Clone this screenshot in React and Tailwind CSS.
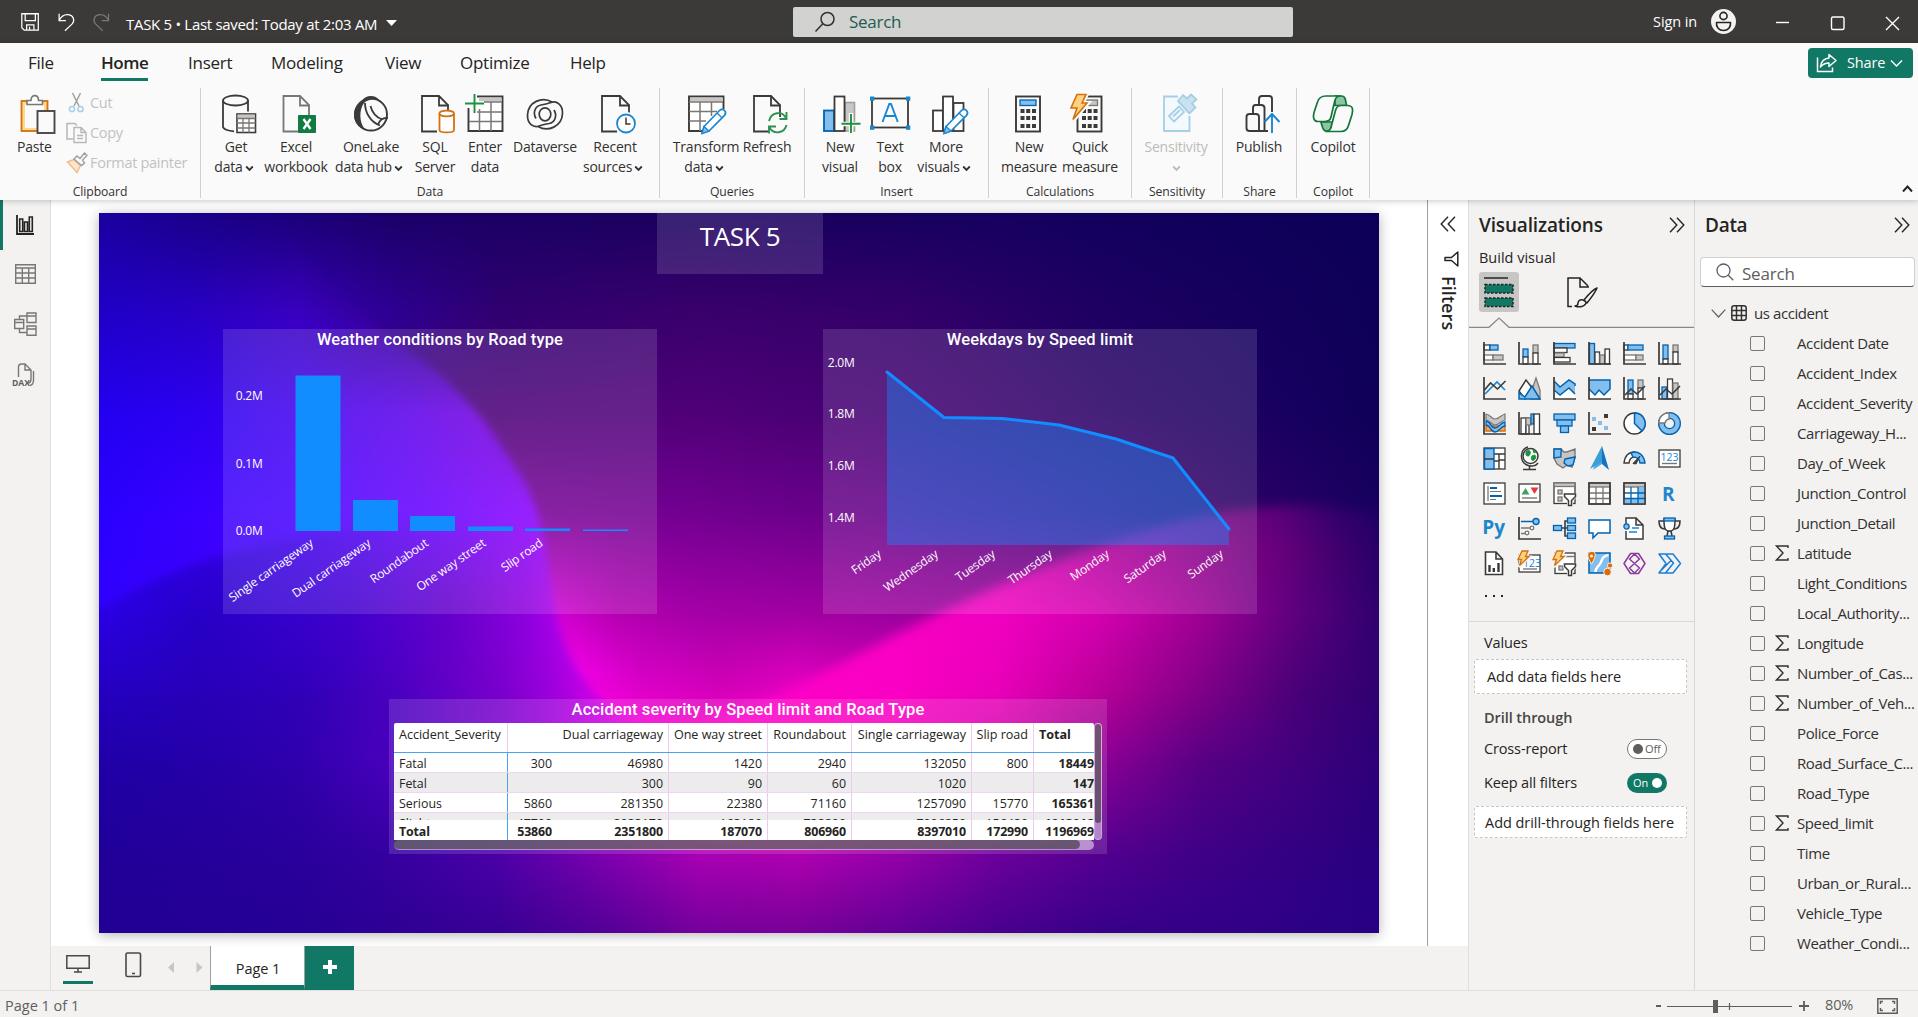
import React from "react";

const DK = "#3b3a39";
const BL = "#83beec";
const BS = "#0063b1";
const GF = "#c8c6c4";
const GS = "#797775";

/* ---------- small shared pieces ---------- */

function Chevron({ className = "text-[#323130]" }) {
  return (
    <svg width="9" height="7" viewBox="0 0 9 7" className={className}>
      <path d="M1.2 1.5 4.5 4.9 7.8 1.5" fill="none" stroke="currentColor" strokeWidth="1.8" />
    </svg>
  );
}

function DoubleChevron({ flip }) {
  return (
    <svg width="16" height="16" viewBox="0 0 16 16" className={flip ? "rotate-180" : ""}>
      <path d="M1 .8 7.8 8 1 15.2M8 .8 14.8 8 8 15.2" fill="none" stroke="#252423" strokeWidth="1.4" />
    </svg>
  );
}

/* ---------- title bar ---------- */

function TitleBar() {
  return (
    <header className="flex h-[43px] items-center bg-[#3b3a39] text-white">
      <svg width="130" height="43" viewBox="0 0 130 43" className="w-[126px] shrink-0" fill="none" stroke="#fff" strokeWidth="1.3">
        <path d="M22.500 13.500h17v17H25l-2.500-2.500zM26 13.500v7h10.500v-7M27.500 30.500v-5.500H35v5.500M30.500 27v3.500" />
        <path d="M61 13.500v7h7M61 20.500c2-4 5.500-6.500 9.500-6 5.500.8 7 6 4 9.500L67 31" />
        <path d="M112 13.500v7h-7M112 20.500c-2-4-5.500-6.500-9.500-6-5.500.8-7 6-4 9.500L106 31" stroke="#7a7876" />
      </svg>
      <span className="w-[260px] whitespace-nowrap pt-[5px] text-[15px] leading-5 tracking-[-0.020em]">TASK 5 • Last saved: Today at 2:03 AM</span>
      <svg width="11" height="6" viewBox="0 0 11 6" className="mt-[2px]"><path d="M0 0h11L5.500 6z" fill="#fff" /></svg>
      <div className="ml-[396px] flex h-[30px] w-[500px] items-center rounded-[2px] bg-[#d2d2d0] pl-[21px]">
        <svg width="22" height="22" viewBox="0 0 22 22" fill="none" stroke="#323130" strokeWidth="1.500">
          <circle cx="13.500" cy="8" r="6.500" /><path d="M8.800 12.700 1.500 20.500" />
        </svg>
        <span className="ml-[13px] text-[17px] tracking-[-0.016em] text-[#1d5c4f]">Search</span>
      </div>
      <span className="ml-[360px] w-[58px] whitespace-nowrap text-[14.500px] tracking-[-0.005em]">Sign in</span>
      <svg width="25" height="25" viewBox="0 0 25 25">
        <circle cx="12.500" cy="12.500" r="12.500" fill="#f3f2f1" />
        <circle cx="12.500" cy="7" r="3.600" fill="none" stroke="#252423" strokeWidth="1.600" />
        <path d="M5.500 13.500h14c.6 4.500-2.500 8-7 8s-7.600-3.500-7-8z" fill="none" stroke="#252423" strokeWidth="1.600" strokeLinejoin="round" />
      </svg>
      <svg width="130" height="20" viewBox="0 0 130 20" className="ml-[38px] mt-[2px]" fill="none" stroke="#fff" strokeWidth="1.400">
        <path d="M2 9.500h13" /><rect x="57.500" y="4" width="12.500" height="12.500" rx="1.500" />
        <path d="M112 4l13 13M125 4l-13 13" />
      </svg>
    </header>
  );
}

/* ---------- ribbon icons (40 x 40 boxes) ---------- */

const Doc = ({ x = 6, s = DK, w = 27 }) => (
  <g fill="#fff" stroke={s} strokeWidth="1.800">
    <path d={`M${x + 16} 37.500H${x + 1}V2h${w - 10}l9 9v12`} fill="#fafafa" />
    <path d={`M${x + w - 9} 2v9.500h9.500`} fill="none" />
  </g>
);

const Pencil = () => (
  <g transform="translate(16 14)">
    <path d="M0 25.500l2-7L17.500 2.500c1.500-1.500 3.700-1.500 5 0s1.200 3.500 0 4.800L7 23z" fill="#fff" stroke="#1a86d0" strokeWidth="1.700" strokeLinejoin="round" />
    <path d="M0 25.500l2-7 5 4.500z" fill="#83beec" stroke="#1a86d0" strokeWidth="1.300" />
    <path d="M15 5l5 4.800" stroke="#1a86d0" strokeWidth="1.300" />
  </g>
);

const Calc = ({ x, screen, ss }) => (
  <g>
    <rect x={x} y="2.500" width="24" height="35" fill="#fafafa" stroke={DK} strokeWidth="1.900" />
    <rect x={x + 4} y="6" width="16" height="5.500" fill={screen} stroke={ss} strokeWidth="1.300" />
    {[15, 22, 30].map((y) => [4.5, 10.2, 16].map((dx) => <rect key={`${y}-${dx}`} x={x + dx} y={y} width="4" height="4" fill={DK} />))}
  </g>
);

const icons = {
  paste: (
    <>
      <rect x="2.500" y="7" width="26" height="30" fill="#ffd98c" stroke="#d3700f" strokeWidth="1.800" />
      <rect x="6" y="10" width="19" height="24" fill="#fafafa" />
      <path d="M8 10.500V6.500h4c0-6.500 7.500-6.500 7.500 0h4v4z" fill="#fff" stroke="#797775" strokeWidth="1.600" />
      <rect x="18.500" y="17" width="17" height="22" fill="#fafafa" stroke="#4a4847" strokeWidth="1.900" />
    </>
  ),
  get: (
    <>
      <path d="M7 6.500v26c0 2.500 5 4.500 11 4.800M32 6.500v11" fill="none" stroke={DK} strokeWidth="1.800" />
      <ellipse cx="19.500" cy="6.500" rx="12.500" ry="5" fill="#fafafa" stroke={DK} strokeWidth="1.800" />
      <rect x="21" y="20" width="18.500" height="18.500" fill="#fff" stroke={DK} strokeWidth="1.600" />
      <rect x="21.500" y="20.500" width="17.500" height="3.500" fill={GF} />
      <path d="M21 24.500h18.500M21 29h18.500M21 34h18.500M27 24.500v14M33 24.500v14" stroke={GS} strokeWidth="1.300" />
    </>
  ),
  excel: (
    <>
      <Doc x={6.5} s="#797775" w={26.5} />
      <rect x="22" y="21" width="18" height="18" rx="1" fill="#107c41" />
      <path d="M27.500 25l7 10M34.500 25l-7 10" stroke="#fff" strokeWidth="2.400" />
    </>
  ),
  onelake: (
    <>
      <circle cx="20" cy="20.500" r="16" fill="#fafafa" stroke={DK} strokeWidth="1.900" />
      <path d="M11 7C14 .5 25 .5 28 6c-7-1.500-12 0-15 3C8 16 8 28 14 35.500 1 32-1 14 11 7z" fill={DK} />
      <path d="M14 9c0 9 5 19 15 22.500M19.500 12c2 8 7 12 12 13.500M27 30.500c2-5 6-7 10-6.500" fill="none" stroke={DK} strokeWidth="1.800" />
    </>
  ),
  sql: (
    <>
      <Doc x={6} />
      <path d="M24.500 19.500v16.500c0 3.200 14.500 3.200 14.500 0V19.500" fill="#fff" stroke="#d3700f" strokeWidth="1.800" />
      <ellipse cx="31.700" cy="19.500" rx="7.300" ry="2.800" fill="#fff" stroke="#d3700f" strokeWidth="1.800" />
    </>
  ),
  enter: (
    <>
      <path d="M12 2.500h25.500v34.500h-34V14" fill="#fff" stroke={DK} strokeWidth="1.900" />
      <rect x="14" y="3.500" width="22.500" height="4" fill={GF} />
      <path d="M14 8h23M9 18h28M4 27.500h33M14.500 15v22M26 8v29" stroke={GS} strokeWidth="1.500" fill="none" />
      <path d="M9.500 0v19M0 9.500h19" stroke="#fafafa" strokeWidth="5" />
      <path d="M9.500 0v19M0 9.500h19" stroke="#1e9141" strokeWidth="1.900" />
    </>
  ),
  dataverse: (
    <g fill="none" stroke={DK} strokeWidth="1.700">
      <path d="M27 8C17 2 3 8 2.500 21c-.3 9 6 13 11.500 11 4-1.500 6-2 10-2.500 6-1 8.500-8 5-13.500" />
      <path d="M13 32.500c10 6 24 0 24.500-13 .3-9-6-13-11.500-11-4 1.500-6 2-10 2.500-6 1-8.500 8-5 13.500" />
      <ellipse cx="20" cy="20.300" rx="5.800" ry="6.500" />
    </g>
  ),
  recent: (
    <>
      <Doc x={6} w={28} />
      <circle cx="31" cy="29.500" r="11.500" fill="#fafafa" />
      <circle cx="31" cy="29.500" r="9" fill="#fff" stroke="#1a86d0" strokeWidth="1.800" />
      <path d="M31 23.500v6.500h4.500" fill="none" stroke={DK} strokeWidth="1.500" />
    </>
  ),
  transform: (
    <>
      <path d="M18 37H3V2.500h34.500V15" fill="#fff" stroke={DK} strokeWidth="1.900" />
      <rect x="4" y="3.500" width="33" height="4" fill={GF} />
      <path d="M3 8h34M3 17.500h28M3 27h17M14 8v29M25.500 8v14" stroke={GS} strokeWidth="1.500" fill="none" />
      <Pencil />
    </>
  ),
  refresh: (
    <>
      <Doc x={6} />
      <path d="M22 27c2-9 13-10.500 17-3M39.500 18v7h-7M39.500 31c-2 8.500-13 10-17 2.500M22 39.500v-7h7" fill="none" stroke="#2f9150" strokeWidth="1.900" />
    </>
  ),
  newvisual: (
    <>
      <rect x="25" y="8.500" width="9.500" height="28.500" fill={GF} stroke="#a19f9d" strokeWidth="1.600" />
      <rect x="4" y="16.500" width="10" height="20.500" fill={BL} stroke={BS} strokeWidth="1.800" />
      <rect x="14.500" y="2.500" width="10" height="34.500" fill="#fff" stroke={DK} strokeWidth="1.800" />
      <path d="M31 19v21M20 30h21" stroke="#fafafa" strokeWidth="4.500" />
      <path d="M31 20v19M21.500 29.800h19" stroke="#1e9141" strokeWidth="1.900" />
    </>
  ),
  textbox: (
    <>
      <rect x="2" y="4.500" width="36" height="29" fill="#fafafa" stroke={DK} strokeWidth="1.800" />
      {[[0, 2.5], [36, 2.5], [0, 31.500], [36, 31.500]].map(([x, y]) => <rect key={`${x}${y}`} x={x} y={y} width="4.300" height="4.300" fill="#1a86d0" />)}
      <path d="M12.500 28L19.300 10h1.700l6.800 18M15 22h10.500" fill="none" stroke="#1a86d0" strokeWidth="1.900" />
    </>
  ),
  morevisuals: (
    <g transform="translate(2 0)">
      <rect x="25.500" y="9" width="10" height="28" fill="#fff" stroke={DK} strokeWidth="1.800" />
      <rect x="5" y="16.500" width="10" height="20.500" fill="#fff" stroke={DK} strokeWidth="1.800" />
      <rect x="15" y="2.500" width="10" height="34.500" fill="#fff" stroke={DK} strokeWidth="1.800" />
      <Pencil />
    </g>
  ),
  newmeasure: <Calc x={7} screen={BL} ss={BS} />,
  quickmeasure: (
    <>
      <Calc x={7.5} screen={GF} ss={GS} />
      <path d="M8 0h9l-4.500 9H18L3 27l4-12.500H0z" fill="#fafafa" stroke="#fafafa" strokeWidth="4" />
      <path d="M7 .5h9L12 9h5L3 25.500l4-11.500H1z" fill="#ffd27f" stroke="#d3700f" strokeWidth="1.600" />
    </>
  ),
  sensitivity: (
    <g stroke="#a6cfe6" fill="#fff" strokeWidth="1.800">
      <path d="M22 2.500H8v34.500h25.500V22" fill="#f3f9fc" />
      <path d="M13 22l10-9.500 5 5.500-10 9.500z" fill="none" />
      <path d="M17 22.500l7-6.500" fill="none" />
      <path d="M22 7l5-6 4 3.500L35 .5l5.500 5-4.500 4 3.500 4-6 6z" fill="#c9e2f0" />
      <path d="M22 7l11.500 12.500" fill="none" />
    </g>
  ),
  publish: (
    <>
      <g fill="#fafafa" stroke={DK} strokeWidth="1.900">
        <path d="M20 37V5c0-2 1-3 3-3h7c2 0 3 1 3 3v32" />
        <path d="M14 37V14c0-2 1-3 2.500-3H22c2 0 3.500 1 3.500 3v23" />
        <path d="M7.500 34V23c0-2 1-3 3-3h6.500c2 0 3 1 3 3v14h-9.500c-2 0-3-1-3-3zM20 37h9" />
      </g>
      <path d="M33 39V18" stroke="#fafafa" strokeWidth="6" />
      <path d="M33 39V20.500M25.500 28L33 20l7.500 8" fill="none" stroke="#1a86d0" strokeWidth="1.900" />
    </>
  ),
  copilot: (
    <g stroke="#13753b" strokeWidth="1.700" fill="#fafafa" strokeLinejoin="round">
      <path d="M22 2h7c3 0 3.500 3 4.500 9.500H22z" fill="#8cc5a2" />
      <path d="M8 28h12l-3 9h-4c-3 0-4-4-5-9z" fill="#8cc5a2" />
      <path d="M13 2h14c-4 0-5 3-6 8l-3 13c-1 4-3 4.500-6 4.500H5c-5 0-5-5-4-9L4.500 8C6 3 9 2 13 2z" />
      <path d="M28 37.500H13c4 0 5-3 6-8l3.500-13c1-4 2.500-5 5.500-5h6.500c6 0 5.500 5 4.500 9l-3.500 11c-1.500 5-4 6-7.500 6z" />
    </g>
  ),
};

function RibbonIcon({ name }) {
  return <svg width="42" height="40" viewBox="-1 0 42 40" className="block shrink-0 overflow-visible">{icons[name]}</svg>;
}

function RibbonButton({ icon, lines, chevron, className, muted }) {
  return (
    <button className={`flex w-[44px] shrink-0 flex-col items-center ${muted ? "text-[#bdbbb9]" : "text-[#323130]"} ${className}`}>
      <RibbonIcon name={icon} />
      <span className="mt-[3px] flex flex-col items-center whitespace-nowrap text-[14px] leading-5 tracking-[-0.015em]">
        <span>{lines[0]}</span>
        {(lines[1] || chevron) && (
          <span className={`flex items-center gap-[2px] ${lines[1] && chevron ? "pr-[4px]" : ""}`}>
            {lines[1]}
            {chevron && <Chevron className={muted ? "mt-[8px] text-[#bdbbb9]" : "mt-[3px] text-[#323130]"} />}
          </span>
        )}
      </span>
    </button>
  );
}

function Group({ label, className, children }) {
  return (
    <section className={`flex h-[110px] shrink-0 flex-col border-r border-[#d2d0ce] ${className}`}>
      <div className="flex h-[96px] shrink-0 pt-[6px]">{children}</div>
      <div className="text-center text-[12.200px] leading-[16px] tracking-[-0.005em] text-[#323130]">{label}</div>
    </section>
  );
}

function ClipRow({ children, label }) {
  return (
    <div className="flex h-[30px] items-center text-[14.500px] tracking-[-0.020em] text-[#c3c1bf]">
      <svg width="22" height="22" viewBox="0 0 22 22" className="mr-[2px]">{children}</svg>
      <span className="whitespace-nowrap">{label}</span>
    </div>
  );
}

function Ribbon() {
  const tabs = [
    ["File", "w-[73px]"], ["Home", "w-[87px]"], ["Insert", "w-[83px]"], ["Modeling", "w-[114px]"],
    ["View", "w-[75px]"], ["Optimize", "w-[110px]"], ["Help", "w-[60px]"],
  ];
  return (
    <div className="relative z-10 h-[157px] bg-[#fafafa] shadow-[0_1px_6px_rgba(0,0,0,0.22)]">
      <nav className="flex h-[45px] items-start pl-[28px] pt-[5px] text-[17px] text-[#252423]">
        {tabs.map(([t, w]) => (
          <div key={t} className={`${w} flex`}>
            <span className={t === "Home" ? "h-[33px] border-b-[3px] border-[#117865] font-semibold leading-[30px] tracking-[-0.025em]" : "leading-[30px] tracking-[-0.015em]"}>{t}</span>
          </div>
        ))}
        <button className="ml-auto mr-[5px] flex h-[30px] w-[105px] items-center rounded-[4px] bg-[#117865] pl-[8px] text-[14.500px] text-white">
          <svg width="22" height="20" viewBox="0 0 22 20" fill="none" stroke="#fff" strokeWidth="1.500">
            <path d="M1.500 4.500v14h15v-4" /><path d="M13 1.500l7 6-7 6v-3.500c-4 0-6.500 1.500-8.500 4 .5-5 3.500-8.500 8.500-9z" strokeLinejoin="round" />
          </svg>
          <span className="ml-[9px] tracking-[-0.010em]">Share</span>
          <svg width="13" height="9" viewBox="0 0 13 9" className="ml-[5px]"><path d="M1 1.500l5.500 5.500L12 1.500" fill="none" stroke="#fff" strokeWidth="1.400" /></svg>
        </button>
      </nav>
      <div className="flex">
        <Group label="Clipboard" className="w-[201px]">
          <button className="ml-[18px] flex w-[40px] shrink-0 flex-col items-start text-[#323130]">
            <RibbonIcon name="paste" />
            <span className="-ml-px mt-[3px] whitespace-nowrap text-[14px] leading-5 tracking-[-0.015em]">Paste</span>
          </button>
          <div className="-mt-[6px] ml-[8px]">
            <ClipRow label="Cut">
              <path d="M6.500 1l6.500 13M14.500 1L8 14" stroke="#a19f9d" strokeWidth="1.500" fill="none" />
              <circle cx="6" cy="17" r="2.600" fill="none" stroke="#a6cfe6" strokeWidth="1.500" /><circle cx="14.500" cy="17" r="2.600" fill="none" stroke="#a6cfe6" strokeWidth="1.500" />
            </ClipRow>
            <ClipRow label="Copy">
              <path d="M7 17H1V1.500h8l2 2" fill="none" stroke="#b9b7b5" strokeWidth="1.500" />
              <path d="M8 5.500h7l5 5v10H8zM15 5.500v5h5M11 13.500h6M11 16.500h6" fill="none" stroke="#b9b7b5" strokeWidth="1.400" />
            </ClipRow>
            <ClipRow label="Format painter">
              <path d="M1.500 10l6-2.500 7 6L11 20.500z" fill="#fde3c8" stroke="#efbb8a" strokeWidth="1.400" />
              <path d="M8 7l3-3 3 2.500L18.500 1 21 3.500 16.500 8l2 3-3 2.500z" fill="#fafafa" stroke="#a19f9d" strokeWidth="1.400" />
            </ClipRow>
          </div>
        </Group>
        <Group label="Data" className="w-[459px]">
          <RibbonButton icon="get" lines={["Get", "data"]} chevron className="ml-[13px]" />
          <RibbonButton icon="excel" lines={["Excel", "workbook"]} className="ml-[16px]" />
          <RibbonButton icon="onelake" lines={["OneLake", "data hub"]} chevron className="ml-[31px]" />
          <RibbonButton icon="sql" lines={["SQL", "Server"]} className="ml-[20px]" />
          <RibbonButton icon="enter" lines={["Enter", "data"]} className="ml-[6px]" />
          <RibbonButton icon="dataverse" lines={["Dataverse"]} className="ml-[16px]" />
          <RibbonButton icon="recent" lines={["Recent", "sources"]} chevron className="ml-[26px]" />
        </Group>
        <Group label="Queries" className="w-[145px]">
          <RibbonButton icon="transform" lines={["Transform", "data"]} chevron className="ml-[24px]" />
          <RibbonButton icon="refresh" lines={["Refresh"]} className="ml-[17px]" />
        </Group>
        <Group label="Insert" className="w-[184px]">
          <RibbonButton icon="newvisual" lines={["New", "visual"]} className="ml-[13px]" />
          <RibbonButton icon="textbox" lines={["Text", "box"]} className="ml-[6px]" />
          <RibbonButton icon="morevisuals" lines={["More", "visuals"]} chevron className="ml-[12px]" />
        </Group>
        <Group label="Calculations" className="w-[143px]">
          <RibbonButton icon="newmeasure" lines={["New", "measure"]} className="ml-[18px]" />
          <RibbonButton icon="quickmeasure" lines={["Quick", "measure"]} className="ml-[17px]" />
        </Group>
        <Group label="Sensitivity" className="w-[91px]">
          <RibbonButton icon="sensitivity" lines={["Sensitivity"]} chevron muted className="ml-[22px]" />
        </Group>
        <Group label="Share" className="w-[74px]">
          <RibbonButton icon="publish" lines={["Publish"]} className="ml-[14px]" />
        </Group>
        <Group label="Copilot" className="w-[73px]">
          <RibbonButton icon="copilot" lines={["Copilot"]} className="ml-[14px]" />
        </Group>
        <svg width="11" height="8" viewBox="0 0 11 8" className="ml-auto mr-[5px] mt-[97px]"><path d="M1 6.500l4.500-5 4.500 5" fill="none" stroke="#252423" strokeWidth="1.900" /></svg>
      </div>
    </div>
  );
}

/* ---------- left rail ---------- */

function Rail() {
  return (
    <aside className="flex h-[790px] w-[51px] shrink-0 flex-col border-r border-[#e1dfdd] bg-[#f3f2f1]">
      <div className="flex h-[50px] items-center border-l-[3px] border-[#117865] pl-[13px]">
        <svg width="18" height="22" viewBox="0 0 18 22" fill="none" stroke="#252423" strokeWidth="1.600">
          <path d="M1 1v19h17" strokeWidth="1.800" /><path d="M3.700 5h3v12.500h-3zM8.500 8h3v9.500h-3zM13.300 3h3v14.500h-3z" />
        </svg>
      </div>
      <div className="flex h-[48px] items-center pl-[15px]">
        <svg width="21" height="20" viewBox="0 0 21 20" fill="none" stroke="#797775" strokeWidth="1.400">
          <path d="M.7.7h19.600v18.600H.7zM.7 4h19.600M.7 9h19.600M.7 14h19.600M7.300 4v15M13.700 4v15" />
        </svg>
      </div>
      <div className="flex h-[52px] items-center pl-[14px]">
        <svg width="23" height="24" viewBox="0 0 23 24" fill="none" stroke="#797775" strokeWidth="1.400">
          <path d="M.7 7.500h9v9h-9zM.7 10.500h9M13 1h9v9.500h-9zM13 4h9M13 14h9v9.300h-9zM13 17h9M5.500 7.500V4H13M5.500 16.500v4H13" />
        </svg>
      </div>
      <div className="flex h-[50px] items-center pl-[12px]">
        <svg width="24" height="24" viewBox="0 0 24 24" fill="none" stroke="#797775" strokeWidth="1.400">
          <path d="M6.500 14V4c0-2 1-3 3-3H13l6 6v9c0 2-.5 4-3 4M13 1v6h6M21.500 8v9c0 3-1 5-3.500 5.500" />
          <text x="0" y="22.500" fontSize="8.600" fontWeight="700" fill="#605e5c" stroke="none" fontFamily="Open Sans">DAX</text>
        </svg>
      </div>
    </aside>
  );
}

/* ---------- wallpaper: bilinear colour meshes ---------- */

function Mesh({ id, rows }) {
  return (
    <g>
      {rows.map(([y, stops], i) => {
        const prev = i === 0 ? y - 1 : rows[i - 1][0];
        return (
          <g key={y}>
            <defs>
              <linearGradient id={`${id}h${i}`} gradientUnits="userSpaceOnUse" x1="0" y1="0" x2="1280" y2="0">
                {stops.map(([x, c]) => <stop key={x} offset={x / 1280} stopColor={c} />)}
              </linearGradient>
              <linearGradient id={`${id}v${i}`} gradientUnits="userSpaceOnUse" x1="0" y1={prev} x2="0" y2={y}>
                <stop offset="0" stopColor="#fff" stopOpacity="0" /><stop offset="1" stopColor="#fff" />
              </linearGradient>
              <mask id={`${id}m${i}`} maskUnits="userSpaceOnUse" x="0" y="0" width="1280" height="720" style={{ maskType: "alpha" }}>
                <rect y={Math.max(prev, 0)} width="1280" height="720" fill={`url(#${id}v${i})`} />
              </mask>
            </defs>
            <rect width="1280" height="720" fill={`url(#${id}h${i})`} mask={i === 0 ? undefined : `url(#${id}m${i})`} />
          </g>
        );
      })}
    </g>
  );
}

const r480 = [[0, "#2400c0"], [100, "#2800b8"], [200, "#3000b8"], [300, "#4c00c0"], [400, "#7800cc"], [450, "#9a00dc"], [490, "#c400e4"], [520, "#e400e0"], [600, "#f000cc"], [700, "#fc00c6"], [800, "#fa00c4"], [900, "#e800b8"], [1000, "#b80098"], [1100, "#800088"], [1200, "#480078"], [1280, "#300070"]];
const tail = [
  [550, [[0, "#2000a8"], [100, "#2400a8"], [200, "#3000ac"], [300, "#4c00be"], [400, "#7800cc"], [500, "#c000dc"], [545, "#e800d8"], [600, "#ff00c8"], [700, "#ff00c8"], [800, "#f000c0"], [900, "#c800a8"], [1000, "#8c0094"], [1100, "#580084"], [1280, "#2c0078"]]],
  [640, [[0, "#200098"], [200, "#2a009c"], [280, "#3400a0"], [400, "#4c00a8"], [500, "#7c00b0"], [600, "#aa00b4"], [700, "#b000b0"], [800, "#9400a8"], [900, "#6c009c"], [1000, "#540090"], [1100, "#400088"], [1280, "#280080"]]],
  [720, [[0, "#220094"], [200, "#260094"], [400, "#380094"], [500, "#500096"], [600, "#74009a"], [700, "#760098"], [800, "#600094"], [900, "#48008c"], [1000, "#380088"], [1280, "#280084"]]],
];
const back = [
  [0, [[0, "#1c00a0"], [100, "#1a0088"], [300, "#1b0068"], [600, "#1a005e"], [900, "#150060"], [1280, "#0c0058"]]],
  [100, [[0, "#2000c8"], [100, "#2a00c0"], [200, "#3600b8"], [300, "#2e0090"], [400, "#300070"], [600, "#3a006c"], [800, "#34006a"], [1000, "#1e0062"], [1280, "#0e0058"]]],
  [200, [[300, "#480080"], [400, "#4c0078"], [600, "#500078"], [800, "#440072"], [1000, "#2a0066"], [1200, "#160060"], [1280, "#100058"]]],
  [300, [[400, "#780098"], [600, "#720090"], [800, "#640086"], [1000, "#460076"], [1100, "#340068"], [1280, "#180060"]]],
  [400, [[460, "#d000d0"], [520, "#b400b0"], [600, "#a400a8"], [750, "#a000a0"], [900, "#980098"], [1100, "#800088"], [1280, "#300068"]]],
  [460, [[480, "#f000e4"], [540, "#d400c4"], [620, "#c800b4"], [700, "#d800bc"], [1280, "#300070"]]],
  [520, [[500, "#ff00e0"], [600, "#f400c8"], [720, "#ff00c8"], [1280, "#300070"]]],
];
const left = [
  [0, back[0][1]],
  [100, [[0, "#2000c8"], [100, "#2800c4"], [200, "#3a00c0"], [260, "#3400a0"], [330, "#300080"]]],
  [200, [[0, "#2200f0"], [120, "#3000f0"], [300, "#5a00ec"], [380, "#7000e0"], [420, "#7000d0"]]],
  [300, [[0, "#2a00ff"], [200, "#4800ff"], [350, "#6c00ff"], [440, "#8c00ff"]]],
  [390, [[0, "#3000ff"], [150, "#4000f4"], [250, "#4800d8"], [350, "#6400cc"], [430, "#9000e0"], [470, "#b800ec"]]],
  [480, r480],
  ...tail,
];
const lowerLeft = [
  [310, [[0, "#2a00ee"], [200, "#3a00e4"], [350, "#5800e0"]]],
  [400, [[0, "#2a00e4"], [100, "#2800c8"], [250, "#3800c0"], [350, "#6000c8"]]],
  [480, r480],
  ...tail,
];
const lower = [
  [290, [[900, "#c000a0"], [1000, "#980090"], [1100, "#780084"], [1180, "#580078"], [1240, "#30006a"], [1280, "#200064"]]],
  [340, [[900, "#e000b4"], [1000, "#b400a0"], [1100, "#8c008c"], [1180, "#68007c"], [1240, "#40006e"], [1280, "#280068"]]],
  [400, [[800, "#f800c4"], [900, "#f000c0"], [1000, "#d400b0"], [1100, "#a00094"], [1200, "#5c007e"], [1280, "#300070"]]],
  [480, r480],
  ...tail,
];

function Wallpaper() {
  return (
    <svg width="1280" height="720" viewBox="0 0 1280 720" className="absolute inset-0">
      <defs>
        <filter id="soft3" x="-20%" y="-20%" width="140%" height="140%"><feGaussianBlur stdDeviation="4" /></filter>
        <filter id="soft7" x="-20%" y="-20%" width="140%" height="140%"><feGaussianBlur stdDeviation="6" /></filter>
        <linearGradient id="fadeR" gradientUnits="userSpaceOnUse" x1="120" y1="0" x2="330" y2="0"><stop offset="0" stopColor="#fff" /><stop offset="1" stopColor="#fff" stopOpacity="0" /></linearGradient>
        <mask id="mLower" maskUnits="userSpaceOnUse" x="0" y="0" width="1280" height="720" style={{ maskType: "alpha" }}>
          <path d="M-40 760V510H580C660 500 740 450 800 420C880 380 960 345 1040 320C1110 298 1170 288 1240 294L1340 310V760Z" fill="#fff" filter="url(#soft7)" />
        </mask>
        <mask id="mLeft" maskUnits="userSpaceOnUse" x="0" y="0" width="1280" height="720" style={{ maskType: "alpha" }}>
          <path d="M-40 -40H150C200 40 250 95 300 130C325 148 342 160 359 179C376 196 389 211 400 230C415 252 426 266 433 285C442 309 446 328 449 349C453 373 456 394 461 413C465 430 470 442 478 455C485 468 500 486 524 502C550 516 560 540 560 560V760H-40Z" fill="#fff" filter="url(#soft3)" />
        </mask>
        <mask id="mLL" maskUnits="userSpaceOnUse" x="0" y="0" width="1280" height="720" style={{ maskType: "alpha" }}>
          <path d="M-40 420L0 397C60 360 130 336 200 326C250 318 300 314 360 312V760H-40Z" fill="url(#fadeR)" filter="url(#soft3)" />
        </mask>
      </defs>
      <Mesh id="bk" rows={back} />
      <g mask="url(#mLower)"><Mesh id="lo" rows={lower} /></g>
      <g mask="url(#mLeft)"><Mesh id="lf" rows={left} /></g>
      <g mask="url(#mLL)"><Mesh id="ll" rows={lowerLeft} /></g>
    </svg>
  );
}

/* ---------- report visuals (items on a free canvas) ---------- */

function CardTitle({ children, className }) {
  return <h2 className={`whitespace-nowrap text-center font-['Roboto'] text-[16.500px] font-medium leading-[22px] text-white ${className}`}>{children}</h2>;
}

function BarVisual() {
  const bars = [[72.5, 155.5], [130, 31], [187, 15], [245, 4.5], [302, 2.5], [360, 1.5]];
  const labels = [["Single carriageway", 91], ["Dual carriageway", 148.500], ["Roundabout", 206], ["One way street", 263.500], ["Slip road", 320.500]];
  return (
    <div className="absolute left-[124px] top-[116px] h-[285px] w-[434px] bg-white/[0.13]">
      <CardTitle className="tracking-[0.008em]">Weather conditions by Road type</CardTitle>
      <svg width="434" height="263" viewBox="0 22 434 263" className="block font-['Open_Sans'] text-[12px]" fill="#fff">
        {[["0.2M", 71], ["0.1M", 138.500], ["0.0M", 205.500]].map(([t, y]) => <text key={t} x="39.500" y={y} textAnchor="end" className="tracking-[-0.020em]">{t}</text>)}
        {bars.map(([x, h]) => <rect key={x} x={x} y={202 - h} width="45" height={h} fill="#118dff" />)}
        {labels.map(([t, x]) => <text key={t} x={x} y="216" textAnchor="end" transform={`rotate(-35 ${x} 216)`} className="text-[12px] tracking-[-0.018em]">{t}</text>)}
      </svg>
    </div>
  );
}

function AreaVisual() {
  const days = ["Friday", "Wednesday", "Tuesday", "Thursday", "Monday", "Saturday", "Sunday"];
  const pts = "64,43 121,88.500 179,89.500 236,96 293,110 350,129 406,200";
  return (
    <div className="absolute left-[724px] top-[116px] h-[285px] w-[434px] bg-white/[0.13]">
      <CardTitle className="tracking-[0.008em]">Weekdays by Speed limit</CardTitle>
      <svg width="434" height="263" viewBox="0 22 434 263" className="block font-['Open_Sans'] text-[12px]" fill="#fff">
        {[["2.0M", 37.5], ["1.8M", 89], ["1.6M", 141], ["1.4M", 193]].map(([t, y]) => <text key={t} x="31.500" y={y} textAnchor="end" className="tracking-[-0.020em]">{t}</text>)}
        <polygon points={`64,216 ${pts} 406,216`} fill="#118dff" fillOpacity="0.400" />
        <polyline points={pts} fill="none" stroke="#118dff" strokeWidth="3" strokeLinejoin="round" strokeLinecap="round" />
        {days.map((d, i) => <text key={d} x={59 + i * 57} y="227" textAnchor="end" transform={`rotate(-35 ${59 + i * 57} 227)`} className="text-[12px] tracking-[-0.018em]">{d}</text>)}
      </svg>
    </div>
  );
}

const cols = "grid grid-cols-[114px_49px_112px_99px_84px_120px_62px_60px]";

function TableRow({ cells, className, bold, gray }) {
  return (
    <div className={`${cols} ${className} ${gray ? "bg-[#ececec]" : "bg-white"}`}>
      {cells.map((c, i) => (
        <div
          key={i}
          className={`overflow-hidden whitespace-nowrap border-[#eec8ee] ${i === 0 ? "border-r-[1.500px] border-r-[#45a5f5] pl-[5px]" : i === 7 ? "flex justify-end font-bold" : `text-right pr-[5px] ${i === 1 ? "" : "border-r"}`} ${bold ? "font-bold tracking-[-0.010em]" : ""}`}
        >
          {c}
        </div>
      ))}
    </div>
  );
}

function MatrixVisual() {
  const head = ["Accident_Severity", "", "Dual carriageway", "One way street", "Roundabout", "Single carriageway", "Slip road", "Total"];
  return (
    <div className="absolute left-[290px] top-[486px] h-[155px] w-[718px] bg-white/[0.13] pl-[5px]">
      <CardTitle className="mr-[5px] h-[24px] leading-[21px] tracking-[0.006em]">Accident severity by Speed limit and Road Type</CardTitle>
      <div className="flex">
        <div className="flex h-[117px] w-[700px] flex-col overflow-hidden rounded-t-[2px] bg-white font-['Open_Sans'] text-[12.400px] text-[#252423]">
          <div className={`${cols} h-[30px] shrink-0 border-b-[1.500px] border-[#45a5f5] text-[12.600px] leading-[23px] tracking-[-0.002em]`}>
            {head.map((c, i) => (
              <div key={i} className={`whitespace-nowrap border-[#f3cdf0] ${i === 0 ? "border-r pl-[5px]" : i === 7 ? "pl-[5px] font-bold" : `flex justify-end pr-[5px] ${i === 1 ? "" : "border-r"}`}`}>{c}</div>
            ))}
          </div>
          <TableRow className="h-5 shrink-0 border-b border-[#f0d5f2] leading-[21px]" cells={["Fatal", "300", "46980", "1420", "2940", "132050", "800", "18449"]} />
          <TableRow gray className="h-5 shrink-0 border-b border-[#f0d5f2] leading-[21px]" cells={["Fetal", "", "300", "90", "60", "1020", "", "147"]} />
          <TableRow className="h-5 shrink-0 border-b border-[#f0d5f2] leading-[21px]" cells={["Serious", "5860", "281350", "22380", "71160", "1257090", "15770", "165361"]} />
          <TableRow gray className="h-[7px] shrink-0 overflow-hidden leading-[21px]" cells={["Slight", "47700", "2023170", "163180", "732800", "7006850", "156420", "1013012"]} />
          <TableRow bold className="h-5 shrink-0 leading-[24px]" cells={["Total", "53860", "2351800", "187070", "806960", "8397010", "172990", "1196969"]} />
        </div>
        <div className="h-[117px] w-[8px] rounded-[4px] border border-white/30 bg-white/45">
          <div className="h-[99px] rounded-[4px] bg-[#252423]/55" />
        </div>
      </div>
      <div className="h-[10px] w-[700px] rounded-[5px] bg-white/50">
        <div className="h-[9px] w-[686px] rounded-[5px] bg-[#252423]/55" />
      </div>
    </div>
  );
}

function Report() {
  return (
    <main className="relative h-[746px] w-[1376px] shrink-0 bg-white">
      <div className="absolute left-[48px] top-[13px] h-[720px] w-[1280px] overflow-hidden shadow-[0_2px_12px_rgba(0,0,0,0.3)]">
        <Wallpaper />
        <div className="absolute left-[558px] top-0 h-[61px] w-[166px] bg-white/[0.13] text-center font-['Open_Sans'] text-[26px] leading-[47px] tracking-[-0.012em] text-white">TASK 5</div>
        <BarVisual />
        <AreaVisual />
        <MatrixVisual />
      </div>
    </main>
  );
}

/* ---------- bottom page tabs ---------- */

function PageTabs() {
  return (
    <div className="flex h-[44px] items-start bg-[#f3f2f1]">
      <div className="ml-[12px] flex h-[38px] w-[30px] flex-col items-center border-b-[3px] border-[#117865] pt-[9px]">
        <svg width="24" height="18" viewBox="0 0 24 18" fill="none" stroke="#4a4847" strokeWidth="1.500"><path d="M.8.800h22.400v12.400H.8zM12 13v4M8 17h8" /></svg>
      </div>
      <svg width="17" height="26" viewBox="0 0 17 26" className="ml-[32px] mt-[6px]" fill="none" stroke="#4a4847" strokeWidth="1.600"><rect x="1" y="1" width="14.500" height="23.500" rx="1.500" /><path d="M7 21.500h3" /></svg>
      <svg width="36" height="12" viewBox="0 0 36 12" className="ml-[26px] mt-[16px]" fill="#c8c6c4"><path d="M6 0v11L0 5.500zM28.500 0v11l6-5.500z" /></svg>
      <div className="ml-[6px] flex h-[44px] w-[95px] items-center justify-center border-x border-b-[5px] border-x-[#a19f9d] border-b-[#117865] bg-white pl-[1px] pt-[6px] text-[14.500px] tracking-[-0.005em] text-[#252423]">Page 1</div>
      <div className="flex h-[44px] w-[49px] items-center justify-center bg-[#117865]">
        <svg width="14" height="14" viewBox="0 0 14 14" className="mb-[3px]"><path d="M7 0v14M0 7h14" stroke="#fff" strokeWidth="4" /></svg>
      </div>
    </div>
  );
}

/* ---------- filters ---------- */

function Filters() {
  return (
    <aside className="flex h-[746px] w-[41px] flex-col items-center border-l border-[#a19f9d] bg-white pt-[16px]">
      <DoubleChevron flip />
      <svg width="15" height="16" viewBox="0 0 15 16" className="ml-[7px] mt-[19px]"><path d="M13.800 1v14L7.500 9.500H1v-3h6.500z" fill="none" stroke="#252423" strokeWidth="1.500" strokeLinejoin="round" /></svg>
      <span className="ml-[2px] mt-[9px] text-[18px] font-semibold leading-[20px] tracking-[0.005em] text-[#252423] [writing-mode:vertical-rl]">Filters</span>
    </aside>
  );
}

/* ---------- visualisations pane ---------- */

const Ax = () => <path d="M1 0v22h22" fill="none" stroke={DK} strokeWidth="1.700" />;
const R = ({ x, y, w, h, f = "#fff", s = DK }) => <rect x={x} y={y} width={w} height={h} fill={f} stroke={s} strokeWidth="1.300" />;
const B = (p) => <R {...p} f={BL} s={BS} />;
const G = (p) => <R {...p} f={GF} s={GS} />;
const Bolt = () => (
  <>
    <path d="M4-1h7L8.500 5H11L1 15l2.500-8H0z" fill="#f3f2f1" stroke="#f3f2f1" strokeWidth="3" />
    <path d="M4-1h6L7.500 4.500H11L1.500 13.500 3.500 7.500H0z" fill="#ffd27f" stroke="#d3700f" strokeWidth="1.300" />
  </>
);
const Funnel = () => (
  <>
    <path d="M10 11h14v4l-4 4v6h-6v-6l-4-4z" fill="#f3f2f1" />
    <path d="M11.500 12h11v2.500l-4 4v5h-3v-5l-4-4z" fill="#fff" stroke={DK} strokeWidth="1.500" />
  </>
);

const vizIcons = [
  <><R x={1} y={3} w={6} h={5} /><B x={7} y={3} w={8} h={5} /><R x={1} y={13} w={9} h={5} s={GS} /><G x={10} y={13} w={10} h={5} /><Ax /></>,
  <><B x={5} y={7} w={5} h={8} /><R x={5} y={15} w={5} h={7} /><G x={15} y={3} w={5} h={8} /><R x={15} y={11} w={5} h={11} /><Ax /></>,
  <><B x={1} y={1.5} w={21} h={4.500} /><R x={1} y={6} w={13} h={4.500} /><G x={1} y={11} w={10} h={4} /><R x={1} y={15.5} w={16} h={4.500} /><Ax /></>,
  <><B x={1.5} y={1.5} w={5} h={20.500} /><R x={7} y={10} w={4.500} h={12} /><G x={12} y={13} w={4.500} h={9} /><R x={17} y={7} w={4.500} h={15} /><Ax /></>,
  <><R x={1} y={3} w={4} h={5} /><B x={5} y={3} w={15} h={5} /><R x={1} y={13} w={12} h={5} s={GS} /><G x={13} y={13} w={7} h={5} /><Ax /></>,
  <><B x={5} y={3} w={5} h={14} /><R x={5} y={17} w={5} h={5} /><G x={15} y={3} w={5} h={7} /><R x={15} y={10} w={5} h={12} /><Ax /></>,
  <><path d="M2 17l12-12 8 8" fill="none" stroke="#1a86d0" strokeWidth="1.600" /><path d="M1.500 13l6-7 7 6 8-8" fill="none" stroke={DK} strokeWidth="1.600" /><Ax /></>,
  <><path d="M13 16l5-15 4 12v9h-9z" fill={GF} stroke={GS} strokeWidth="1.300" /><path d="M1 14L8 3l7 9-8 10z" fill="#fff" stroke={DK} strokeWidth="1.500" /><path d="M1 16l6 4 7-11 8 13H1z" fill={BL} stroke={BS} strokeWidth="1.500" /></>,
  <><path d="M1 5l6 5 9-7 6 4v11l-6-7-9 7-6-5z" fill={BL} /><path d="M7 18l9-7 6 6v5H1v-9z" fill="#fff" /><path d="M1 4l6 6 9-7 6 4v2M1 13l6 5 9-7 6 6" fill="none" stroke={BS} strokeWidth="1.500" /><Ax /></>,
  <><path d="M1 14h21v8H1z" fill="#fff" /><path d="M1 3h21v9l-6 6-5-5-4 5-6-6" fill={BL} stroke={BS} strokeWidth="1.500" /><Ax /></>,
  <><B x={5} y={3} w={5} h={14} /><R x={5} y={17} w={5} h={5} /><G x={15} y={3} w={5} h={8} /><R x={15} y={11} w={5} h={11} /><path d="M2 18l6-6 6 5 8-8" fill="none" stroke={DK} strokeWidth="1.600" /><Ax /></>,
  <><B x={4} y={10} w={5} h={12} /><R x={9.500} y={2} w={5} h={20} /><G x={15} y={6} w={5} h={16} /><path d="M2 18l6-6 6 5 8-8" fill="none" stroke={DK} strokeWidth="1.600" /><Ax /></>,
  <><path d="M3 14h19v5H3z" fill="#f9a55a" stroke="#d3700f" strokeWidth="1.400" /><path d="M3 2c4 0 5 5 9 5s6-4 10-5v6c-4 1-6 5-10 5S7 8 3 8z" fill={GF} stroke={GS} strokeWidth="1.200" /><path d="M3 9c4 0 5 7 9 7s6-6 10-6v4c-4 0-6 6-10 6S7 13 3 13z" fill={BL} stroke={BS} strokeWidth="1.300" /><Ax /></>,
  <><R x={3} y={6} w={5} h={16} /><R x={8} y={6} w={3} h={16} /><G x={8} y={6} w={5} h={7} /><B x={13} y={2} w={2.500} h={10} /><R x={16} y={2} w={5.500} h={20} /><Ax /></>,
  <><B x={1} y={2} w={21} h={6} /><B x={4} y={8} w={15} h={6} /><B x={7.500} y={14} w={8} h={6.500} /></>,
  <><rect x="4" y="5" width="4" height="4" fill={BL} /><rect x="16" y="2" width="4" height="4" fill={DK} /><rect x="10" y="9" width="4" height="4" fill={BL} /><rect x="4" y="15" width="4" height="4" fill={DK} /><rect x="16" y="14" width="4" height="4" fill={BL} /><Ax /></>,
  <><circle cx="11.500" cy="11.500" r="10.500" fill="#fff" stroke={DK} strokeWidth="1.500" /><path d="M11.500 1A10.500 10.500 0 0 1 19 19l-7.500-7.500z" fill={BL} stroke={BS} strokeWidth="1.500" /></>,
  <><circle cx="11.500" cy="11.500" r="8" fill="none" stroke={BS} strokeWidth="7" /><circle cx="11.500" cy="11.500" r="8" fill="none" stroke={BL} strokeWidth="4.400" /><path d="M11 .800V7C8 7.500 7.500 9 7 11H.8C.8 5 5 1 11 .800z" fill="#fff" stroke={GS} strokeWidth="1.300" /></>,
  <><R x={1} y={1} w={21} h={21} /><rect x="1.500" y="1.500" width="9.500" height="20.500" fill={BL} stroke={BS} strokeWidth="1.400" /><path d="M11 7h11M1 12h10M16 7v15M11 14h5M16 13h6" stroke={DK} strokeWidth="1.400" /></>,
  <><circle cx="12.500" cy="9" r="7.500" fill="#fff" stroke={DK} strokeWidth="1.500" /><path d="M8 5c3-3 5-1 4 2s-3 2-4 1zM14 9c3-2 5 0 3 3s-5 1-3-3zM15 3l3 2-2 1z" fill="#1e9141" stroke="#1e9141" /><path d="M10 0C2 2 1 14 9 18c4 2 9 1 11-2M11.500 19v3M5 22.500h13" fill="none" stroke={DK} strokeWidth="1.500" /></>,
  <><path d="M1 2h7l3 3h3l8-3v9l-3 9-5-2-4 3-6-4-3-6z" fill={GF} stroke={GS} strokeWidth="1.400" /><path d="M1 2h7c1 4-1 5 0 8l-7 1zM12 12l10-2-2 8-5 1-4-3z" fill={BL} stroke={BS} strokeWidth="1.400" /></>,
  <><path d="M14-1L5 23l9-6z" fill="#4db0e4" /><path d="M14-1l7 24-7-6z" fill="#1474c4" /><path d="M14-1L2 22l12-7z" fill="#3a9fd5" /></>,
  <><path d="M1 16C2 8 6 5 11.500 5v5C8 10 6.500 12 6 16z" fill="#fff" stroke={DK} strokeWidth="1.400" /><path d="M8 6C15 3 21 8 22 16h-5c-.500-4-3-6-7-6z" fill={BL} stroke={BS} strokeWidth="1.400" /><path d="M10 16.500L17 9l-4 8z" fill={DK} stroke={DK} /></>,
  <><R x={1} y={3} w={21} h={17} /><text x="11.500" y="13.500" textAnchor="middle" fontSize="10.500" fill="#1a86d0" fontFamily="Open Sans">123</text><path d="M4 16.500h15" stroke={GS} strokeWidth="1.400" /></>,
  <><R x={1} y={1} w={21} h={21} /><path d="M5 4v15" stroke={GS} strokeWidth="1.300" /><path d="M7 6h7M7 14h12" stroke={BS} strokeWidth="2" /><path d="M7 9.500h11M7 17.500h6" stroke={GS} strokeWidth="1.200" /></>,
  <><R x={1} y={2} w={21} h={18} /><path d="M3.500 12.500L7.500 6l4 6.500z" fill="#1e9141" opacity=".85" /><path d="M12.500 5.500h8l-4 6.500z" fill="#e23b3b" /><path d="M4 16h15" stroke={GS} strokeWidth="1.400" /></>,
  <><R x={1} y={1} w={21} h={20.500} /><G x={1} y={1} w={21} h={3.500} /><G x={5} y={8} w={4} h={4} /><G x={5} y={15} w={4} h={4} /><Funnel /></>,
  <><R x={1} y={1} w={21} h={21} /><G x={1} y={1} w={21} h={4} /><path d="M1 11h21M1 16.500h21M8 5v17M15 5v17" stroke={GS} strokeWidth="1.300" /><rect x="1" y="1" width="21" height="21" fill="none" stroke={DK} strokeWidth="1.500" /></>,
  <><R x={1} y={1} w={21} h={21} /><G x={1} y={1} w={21} h={4} /><path d="M15 5h7v17H1v-5.500h14z" fill={BL} /><path d="M1 11h21M1 16.500h21M8 5v17M15 5v17" stroke={BS} strokeWidth="1.300" /><rect x="1" y="1" width="21" height="21" fill="none" stroke={DK} strokeWidth="1.500" /></>,
  <text x="4" y="18.500" fontSize="19" fontWeight="700" fill="#1f86cb" fontFamily="Open Sans">R</text>,
  <text x="-.8" y="17" fontSize="19" fontWeight="700" fill="#1f86cb" fontFamily="Open Sans">Py</text>,
  <><path d="M3 4.500h12" stroke={BS} strokeWidth="1.500" /><circle cx="18" cy="4.500" r="3" fill={BL} stroke={BS} strokeWidth="1.400" /><path d="M3 11h9M3 16.500h4" stroke={GS} strokeWidth="1.400" /><circle cx="14" cy="11" r="1.800" fill="#fff" stroke={GS} strokeWidth="1.300" /><circle cx="9" cy="16" r="1.800" fill="#fff" stroke={GS} strokeWidth="1.300" /><Ax /></>,
  <><path d="M8 11h7M15 4h-3v15h3" fill="none" stroke={DK} strokeWidth="1.600" /><B x={0.500} y={8.500} w={8} h={5} /><B x={14.500} y={1} w={8} h={5} /><B x={14.500} y={8.500} w={8} h={5} /><B x={14.500} y={16} w={8} h={5.500} /></>,
  <path d="M1 3h21v13H10l-5 5v-5H1z" fill="#fff" stroke={BS} strokeWidth="1.500" />,
  <><path d="M3 7V1h10l7 7v14H3v-8M13 1v7h7" fill="#fff" stroke={DK} strokeWidth="1.500" /><circle cx="3.500" cy="9.500" r="2.600" fill={BL} stroke={BS} strokeWidth="1.300" /><path d="M9 11h7M6 15h8" stroke="#1a86d0" strokeWidth="1.300" /></>,
  <><path d="M6 4H1c0 5 2 8 6 8M17 4h5c0 5-2 8-6 8M9 19l1-5h3l1 5" fill="none" stroke={DK} strokeWidth="1.600" /><path d="M6 2h11c0 7 0 12-5.500 12S6 9 6 2z" fill="#fff" stroke={DK} strokeWidth="1.500" /><B x={6} y={1} w={11} h={3} /><B x={6.500} y={19} w={10} h={3} /></>,
  <><path d="M2.500 0h10.500l6.500 7v15.500h-17zM13 0v7h6.500" fill="#fff" stroke={DK} strokeWidth="1.600" /><path d="M6.500 20v-7M10.800 20v-4M15.500 20v-9" stroke={DK} strokeWidth="2.400" /></>,
  <><R x={1} y={3} w={21} h={17} /><text x="14" y="14.500" textAnchor="middle" fontSize="10.500" fill="#1a86d0" fontFamily="Open Sans">123</text><path d="M5 17h14" stroke={GS} strokeWidth="1.400" /><Bolt /></>,
  <><R x={2} y={1} w={20} h={20.500} /><path d="M10 4.500h12" stroke={GS} strokeWidth="1.500" /><G x={6} y={14} w={4} h={4} /><Funnel /><Bolt /></>,
  <><path d="M1 1h21v20H1z" fill={BL} stroke={BS} strokeWidth="1.500" /><path d="M20.500 3c-6 1-6 4-8 8s-5 4-5 9" fill="none" stroke="#fff" strokeWidth="2.500" /><path d="M3.500-.500C-2 0-1 5 3.500 12 8 5 9-1 3.500-.500z" fill="#dd6b00" stroke="#f3f2f1" /><circle cx="3.500" cy="4" r="1.500" fill="#fff" /><circle cx="22" cy="13.500" r="2.600" fill="#dd6b00" stroke="#f3f2f1" /><circle cx="19.500" cy="20" r="3.800" fill="#dd6b00" stroke="#f3f2f1" /></>,
  <g fill="none" stroke="#8b3a9e" strokeWidth="1.500" strokeLinejoin="round"><path d="M7.500 1.500h8L22 11.500l-6.500 10h-8L1 11.500z" /><path d="M11.500 2l5 5-5 4.500-5-4.500zM11.500 11.500l5 4.500-5 5-5-5z" /></g>,
  <g fill="none" stroke="#1a7fd4" strokeWidth="1.500" strokeLinejoin="round"><path d="M1 2h14l7.500 9.500L15 21H1l7-9.500zM8 2.500l7.500 8.500L7.500 21M1 20.500L13.500 8M8 11.500l-6.500-9" /></g>,
];

function VizPane() {
  return (
    <aside className="flex h-[790px] w-[226px] shrink-0 flex-col border-l border-[#e1dfdd] bg-[#f3f2f1] text-[#252423]">
      <div className="flex h-[30px] items-center justify-between pl-[10px] pr-[9px] pt-[20px]">
        <h2 className="-mt-px text-[19px] font-semibold leading-[24px] tracking-[-0.008em]">Visualizations</h2>
        <DoubleChevron />
      </div>
      <div className="pl-[10px] pt-[18px] text-[14.500px] font-medium leading-[20px] tracking-[0em]">Build visual</div>
      <div className="flex pl-[10px] pt-[4px]">
        <div className="flex h-[40px] w-[40px] items-center justify-center rounded-[3px] bg-[#c8c6c4]">
          <svg width="30" height="32" viewBox="0 0 30 32">
            <path d="M0 2h24" stroke="#252423" strokeWidth="1.500" />
            <rect x="1" y="8.500" width="28" height="8.500" fill="#117865" stroke="#252423" strokeWidth="1.500" strokeDasharray="2.500 1.500" />
            <rect x="1" y="22" width="28" height="8.500" fill="#117865" stroke="#252423" strokeWidth="1.500" strokeDasharray="2.500 1.500" />
          </svg>
        </div>
        <svg width="32" height="32" viewBox="0 0 32 32" className="ml-[47px] mt-[4px]" fill="none" stroke="#252423" strokeWidth="1.500">
          <path d="M6 30.500H2V2h12l8 8M14 2v9h9" />
          <path d="M31 12c-5 2-9 7-13 12l3 3c4-5 8-10 10-15zM17 24c-3-1-5 1-5 3s-1 3-3 3c5 2 11 0 11-4z" strokeLinejoin="round" />
        </svg>
      </div>
      <svg width="225" height="11" viewBox="0 0 225 11" className="mt-[5px] block shrink-0"><path d="M0 10.300h20L30 1l10 9.300h185" fill="none" stroke="#8a8886" strokeWidth="1.200" /></svg>
      <div className="mt-[14px] grid w-[224px] auto-rows-[35px] grid-cols-6 pl-[14px]">
        {vizIcons.map((ic, i) => <svg key={i} width="24" height="26" viewBox="0 -1 24 26" className="-mt-px block overflow-visible">{ic}</svg>)}
      </div>
      <div className="flex gap-[6px] pl-[16px] pt-[8px]">{[0, 1, 2].map((i) => <span key={i} className="h-[2px] w-[2px] bg-[#252423]" />)}</div>
      <div className="mt-[24px] border-t border-[#dad8d6] pl-[5px] pr-[7px] text-[14.500px] tracking-[-0.010em]">
        <div className="pl-[10px] pt-[11px] leading-[20px]">Values</div>
        <div className="mt-[6px] h-[35px] rounded-[2px] border border-dashed border-[#c8c6c4] bg-white pl-[12px] leading-[33px] tracking-[-0.005em]">Add data fields here</div>
        <div className="pl-[10px] pt-[14px] font-semibold leading-[20px] tracking-[-0.005em] text-[#484644]">Drill through</div>
        <div className="mt-[11px] flex h-5 items-center justify-between pl-[10px] pr-[20px]">
          Cross-report
          <span className="flex h-5 w-10 items-center rounded-full border border-[#797775] bg-white pl-[5px] text-[11px] text-[#605e5c]"><i className="mr-[2px] h-[10px] w-[10px] rounded-full bg-[#605e5c]" />Off</span>
        </div>
        <div className="mt-[14px] flex h-5 items-center justify-between pl-[10px] pr-[20px]">
          Keep all filters
          <span className="flex h-5 w-10 items-center rounded-full bg-[#117865] pl-[6px] text-[11px] text-white">On<i className="ml-[4px] h-[10px] w-[10px] rounded-full bg-white" /></span>
        </div>
        <div className="mt-[13px] h-[32px] whitespace-nowrap rounded-[2px] border border-dashed border-[#c8c6c4] bg-white pl-[10px] leading-[31px] tracking-[-0.003em]">Add drill-through fields here</div>
      </div>
    </aside>
  );
}

/* ---------- data pane ---------- */

const fields = [
  ["Accident Date"], ["Accident_Index"], ["Accident_Severity"], ["Carriageway_H..."], ["Day_of_Week"], ["Junction_Control"],
  ["Junction_Detail"], ["Latitude", 1], ["Light_Conditions"], ["Local_Authority..."], ["Longitude", 1], ["Number_of_Cas...", 1],
  ["Number_of_Veh...", 1], ["Police_Force"], ["Road_Surface_C..."], ["Road_Type"], ["Speed_limit", 1], ["Time"],
  ["Urban_or_Rural..."], ["Vehicle_Type"], ["Weather_Condi..."],
];

function DataPane() {
  return (
    <aside className="flex h-[790px] w-[224px] shrink-0 flex-col border-l border-[#dad8d6] bg-[#f3f2f1] text-[#252423]">
      <div className="flex h-[30px] items-center justify-between pl-[10px] pr-[8px] pt-[20px]">
        <h2 className="-mt-px text-[19px] font-semibold leading-[24px] tracking-[-0.015em]">Data</h2>
        <DoubleChevron />
      </div>
      <div className="ml-[5px] mt-[27px] flex h-[30px] w-[215px] shrink-0 items-center rounded-[4px] border border-[#d2d0ce] border-b-[#605e5c] bg-white pl-[15px]">
        <svg width="18" height="18" viewBox="0 0 18 18" fill="none" stroke="#605e5c" strokeWidth="1.300"><circle cx="7.500" cy="7.500" r="6.500" /><path d="M12.300 12.300l5 5" /></svg>
        <span className="ml-[8px] mt-[3px] text-[17px] tracking-[-0.012em] text-[#605e5c]">Search</span>
      </div>
      <div className="mt-[11px] flex h-[30px] items-center pl-[16px]">
        <svg width="15" height="9" viewBox="0 0 15 9"><path d="M.7.700L7.500 8 14.300.700" fill="none" stroke="#605e5c" strokeWidth="1.200" /></svg>
        <svg width="16" height="16" viewBox="0 0 16 16" className="ml-[5px]" fill="none" stroke="#323130" strokeWidth="1.500"><rect x=".8" y=".8" width="14.400" height="14.400" rx="2.500" /><path d="M5.500 1v14M10.500 1v14M1 5.500h14M1 10.500h14" /></svg>
        <span className="ml-[7px] text-[15px] tracking-[-0.028em] text-[#323130]">us accident</span>
      </div>
      {fields.map(([f, sum]) => (
        <div key={f} className="flex h-[30px] shrink-0 items-center whitespace-nowrap pl-[55px] text-[15px] tracking-[-0.026em] text-[#323130]">
          <span className="h-[15px] w-[15px] shrink-0 rounded-[2px] border border-[#797775]" />
          <span className="flex w-[32px] shrink-0 pl-[10px]">
            {sum && <svg width="14" height="16" viewBox="0 0 14 16"><path d="M13 3V1H1.500L8 8l-6.500 7H13v-2" fill="none" stroke="#323130" strokeWidth="1.400" /></svg>}
          </span>
          {f}
        </div>
      ))}
    </aside>
  );
}

function StatusBar() {
  return (
    <footer className="flex h-[27px] items-center border-t border-[#e1dfdd] bg-[#f3f2f1] pl-[5px] text-[14.500px] tracking-[0em] text-[#605e5c]">
      <span className="pt-[4px]">Page 1 of 1</span>
      <svg width="160" height="20" viewBox="0 0 160 20" className="ml-auto mt-[3px]" fill="none" stroke="#605e5c">
        <path d="M2 10h5M145 10h10M150 5v10" strokeWidth="1.800" /><path d="M13 10.500h125" strokeWidth="1.200" /><path d="M75.500 7v7" strokeWidth="1.200" /><rect x="59" y="4" width="5" height="13" fill="#605e5c" stroke="none" />
      </svg>
      <span className="ml-[11px] w-[52px] pt-[2px] tracking-[-0.010em]">80%</span>
      <svg width="21" height="16" viewBox="0 0 21 16" className="mr-[20px] mt-[3px]" fill="none" stroke="#605e5c" strokeWidth="1.500"><path d="M.8.800h19.400v14.400H.8z" /><path d="M3.500 6V3.500H6M15 3.500h2.500V6M17.500 10v2.500H15M6 12.500H3.500V10" /></svg>
    </footer>
  );
}

export default function App() {
  return (
    <div className="flex h-[1017px] w-[1918px] flex-col overflow-hidden bg-[#f3f2f1] font-['Open_Sans',sans-serif]">
      <TitleBar />
      <Ribbon />
      <div className="flex h-[790px]">
        <Rail />
        <div className="flex w-[1417px] shrink-0 flex-col">
          <div className="flex h-[746px]">
            <Report />
            <Filters />
          </div>
          <PageTabs />
        </div>
        <VizPane />
        <DataPane />
      </div>
      <StatusBar />
    </div>
  );
}
